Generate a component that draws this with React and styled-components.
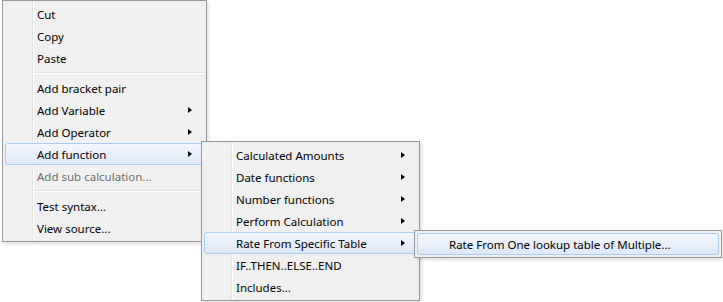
import React from "react";
import styled, { createGlobalStyle } from "styled-components";

const GlobalStyle = createGlobalStyle`
  html, body {
    margin: 0;
    padding: 0;
    background: #fff;
  }
  body {
    font-family: "Noto Sans", "Open Sans", sans-serif;
    font-size: 11.5px;
  }
`;

const Page = styled.div`
  width: 723px;
  height: 302px;
  padding: 0 0 0 2px;
  box-sizing: border-box;
  position: relative;
  overflow: hidden;
`;

const Menu = styled.ul`
  list-style: none;
  margin: 0;
  padding: 2px;
  width: ${(p) => p.$width}px;
  box-sizing: border-box;
  border: 1px solid #979797;
  background:
    linear-gradient(
      to right,
      transparent 29px,
      #e2e3e3 29px,
      #e2e3e3 30px,
      #ffffff 30px,
      #ffffff 31px,
      transparent 31px
    ),
    #f0f0f0;
  box-shadow: 2px 2px 3px rgba(0, 0, 0, 0.12);
`;

// cascading submenus float over the parent menu
const SubMenu = styled(Menu)`
  position: absolute;
  top: -3px;
  left: ${(p) => p.$left}px;
  z-index: 2;
`;

const Item = styled.li`
  position: relative;
  display: flex;
  align-items: center;
  height: 22px;
  padding: 0 11px 0 31px;
  box-sizing: border-box;
  color: ${(p) => (p.$disabled ? "#6d6d6d" : "#000")};
  white-space: nowrap;
  border-radius: 3px;
  border: 1px solid ${(p) => (p.$active ? "#a9cdf3" : "transparent")};
  background: ${(p) =>
    p.$active
      ? "linear-gradient(to bottom, #f3f7fd 0%, #e8effa 50%, #dde8f7 100%)"
      : "transparent"};
`;

const Arrow = styled.span`
  margin-left: auto;
  width: 0;
  height: 0;
  border-top: 3.5px solid transparent;
  border-bottom: 3.5px solid transparent;
  border-left: 4px solid #000;
`;

const Separator = styled.li`
  height: 8px;
  margin-left: 30px;
  display: flex;
  flex-direction: column;
  justify-content: center;

  &::before {
    content: "";
    display: block;
    height: 1px;
    background: #e0e0e0;
    border-bottom: 1px solid #fff;
  }
`;

const functionItems = [
  { label: "Calculated Amounts", sub: true },
  { label: "Date functions", sub: true },
  { label: "Number functions", sub: true },
  { label: "Perform Calculation", sub: true },
  { label: "Rate From Specific Table", sub: true, active: true },
  { label: "IF..THEN..ELSE..END" },
  { label: "Includes..." },
];

export default function App() {
  return (
    <Page>
      <GlobalStyle />
      <Menu $width={205}>
        <Item>Cut</Item>
        <Item>Copy</Item>
        <Item>Paste</Item>
        <Separator />
        <Item>Add bracket pair</Item>
        <Item>
          Add Variable
          <Arrow />
        </Item>
        <Item>
          Add Operator
          <Arrow />
        </Item>
        <Item $active>
          Add function
          <Arrow />
          <SubMenu $width={219} $left={195}>
            {functionItems.map((f) => (
              <Item key={f.label} $active={f.active}>
                {f.label}
                {f.sub && <Arrow />}
                {f.active && (
                  <SubMenu $width={308} $left={209}>
                    <Item $active>Rate From One lookup table of Multiple...</Item>
                  </SubMenu>
                )}
              </Item>
            ))}
          </SubMenu>
        </Item>
        <Item $disabled>Add sub calculation...</Item>
        <Separator />
        <Item>Test syntax...</Item>
        <Item>View source...</Item>
      </Menu>
    </Page>
  );
}
